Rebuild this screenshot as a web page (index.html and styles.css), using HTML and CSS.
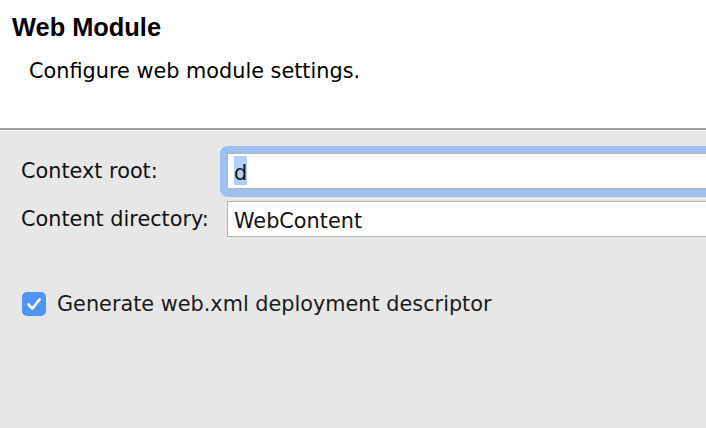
FILE: index.html
```html
<!DOCTYPE html>
<html>
<head>
<meta charset="utf-8">
<link rel="stylesheet" href="styles.css">
</head>
<body>
<div class="page">
  <header class="header">
    <h1 class="title">Web Module</h1>
    <p class="subtitle">Configure web module settings.</p>
  </header>
  <div class="sep"></div>
  <main class="panel">
    <div class="form">
      <label class="label">Context root:</label>
      <div class="field focused"><span class="val sel">d</span></div>
      <label class="label">Content directory:</label>
      <div class="field"><span class="val">WebContent</span></div>
    </div>
    <div class="check-row">
      <span class="checkbox">
        <svg width="24" height="24" viewBox="0 0 24 24"><path d="M6.5 12.5 L10.3 16.6 L17.6 7.4" fill="none" stroke="#fff" stroke-width="2.6" stroke-linecap="round" stroke-linejoin="round"/></svg>
      </span>
      <span class="check-label">Generate web.xml deployment descriptor</span>
    </div>
  </main>
</div>
</body>
</html>
```
FILE: styles.css
```css
html, body {
  margin: 0;
  padding: 0;
  width: 706px;
  height: 428px;
  overflow: hidden;
  background: #e7e7e7;
}
.page {
  font-family: "DejaVu Sans", sans-serif;
  font-size: 20.8px;
  color: #111;
  display: flex;
  flex-direction: column;
  height: 428px;
  width: 706px;
  overflow: hidden;
}
.header {
  background: #fff;
  height: 128px;
  padding: 12px 0 0 12px;
  box-sizing: border-box;
}
.title {
  margin: 0;
  font-family: "Liberation Sans", Arial, sans-serif;
  font-weight: bold;
  font-size: 25.4px;
  line-height: 30px;
  color: #000;
}
.subtitle {
  margin: 17px 0 0 17px;
  line-height: 24px;
  color: #000;
}
.sep {
  height: 2px;
  background: #9d9d9d;
  border-bottom: 1px solid #fff;
}
.panel {
  flex: 1;
  background: #e7e7e7;
  padding: 22px 0 0 21px;
  overflow: hidden;
}
.form {
  position: relative;
  z-index: 0;
  display: grid;
  grid-template-columns: 196px 490px;
  column-gap: 10px;
  row-gap: 12px;
}
.label {
  line-height: 36px;
  white-space: nowrap;
}
.field {
  position: relative;
  height: 36px;
  box-sizing: border-box;
  background: #fff;
  border: 1px solid #b4b4b4;
  border-right: 0;
  padding: 2px 6px 0;
  white-space: nowrap;
}
.field.focused::before {
  content: "";
  position: absolute;
  left: -8px;
  top: -8px;
  right: -8px;
  bottom: -9px;
  border-radius: 8px;
  background: #9dc0ee;
  z-index: -1;
}
.val {
  display: inline-block;
  padding-top: 5px;
  line-height: 24px;
  color: #111;
}
.sel {
  background: #b0d0fa;
}
.check-row {
  display: flex;
  align-items: center;
  gap: 11px;
  margin-top: 55px;
  padding-left: 1px;
}
.checkbox {
  width: 24px;
  height: 24px;
  border-radius: 5px;
  background: #4f95f8;
  display: flex;
}
.check-label {
  line-height: 24px;
  color: #1a1a1a;
}
```
